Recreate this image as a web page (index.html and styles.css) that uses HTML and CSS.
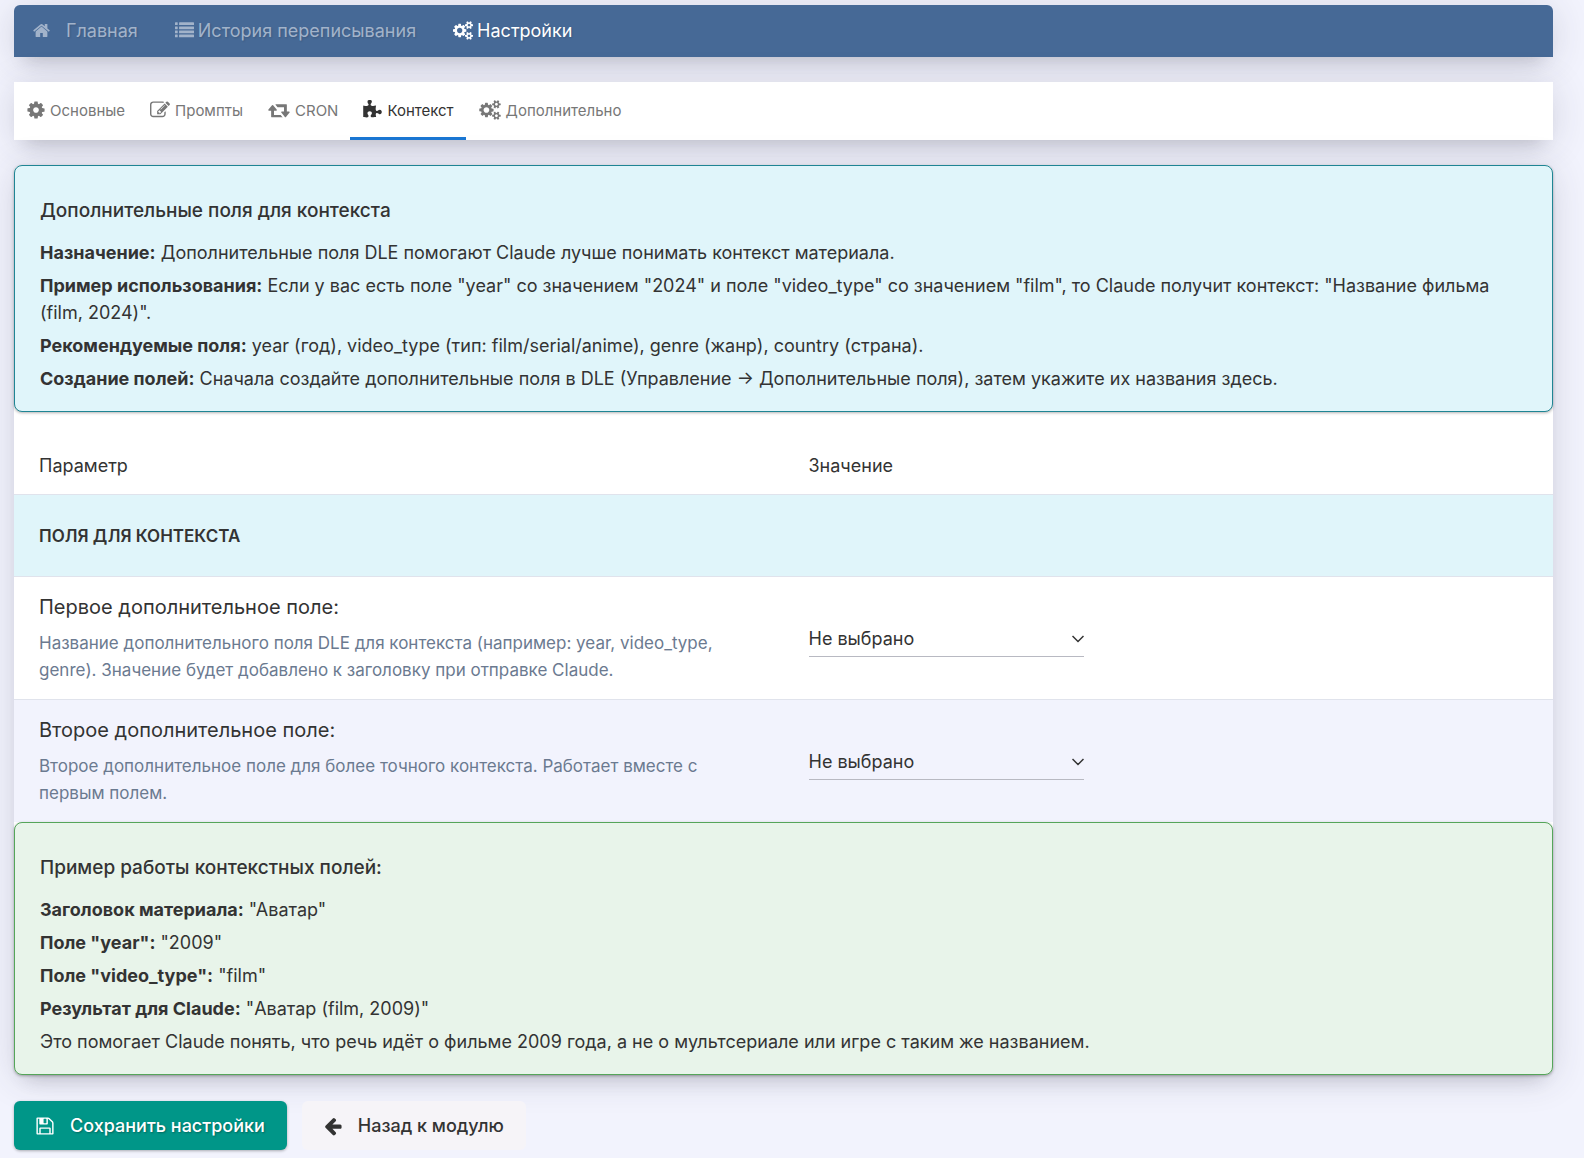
FILE: index.html
```html
<!DOCTYPE html>
<html lang="ru">
<head>
  <meta charset="UTF-8">
  <meta name="viewport" content="width=device-width, initial-scale=1.0">
  <title>Настройки</title>
  <link rel="stylesheet" href="styles.css">
</head>
<body>
  <svg class="sprite" aria-hidden="true">
    <symbol id="i-home" viewBox="64 0 1664 1792"><path d="M1472 992v480q0 26-19 45t-45 19h-384v-384h-256v384h-384q-26 0-45-19t-19-45v-480q0-1 .5-3t.5-3l575-474 575 474q1 2 1 6zm223-69l-62 74q-8 9-21 11h-3q-13 0-21-7l-692-577-692 577q-12 8-24 7-13-2-21-11l-62-74q-8-10-7-23.5t11-21.5l719-599q32-26 76-26t76 26l244 204v-195q0-14 9-23t23-9h192q14 0 23 9t9 23v408l219 182q10 8 11 21.5t-7 23.5z"/></symbol>
    <symbol id="i-list" viewBox="0 0 1792 1792"><rect x="0" y="128" width="256" height="256" rx="32"/><rect x="0" y="512" width="256" height="256" rx="32"/><rect x="0" y="896" width="256" height="256" rx="32"/><rect x="0" y="1280" width="256" height="256" rx="32"/><rect x="384" y="128" width="1408" height="256" rx="32"/><rect x="384" y="512" width="1408" height="256" rx="32"/><rect x="384" y="896" width="1408" height="256" rx="32"/><rect x="384" y="1280" width="1408" height="256" rx="32"/></symbol>
    <symbol id="i-cog" viewBox="128 0 1536 1792"><path d="M1152 896q0-106-75-181t-181-75-181 75-75 181 75 181 181 75 181-75 75-181zm512-109v222q0 12-8 23t-20 13l-185 28q-19 54-39 91 35 50 107 138 10 12 10 25t-9 23q-27 37-99 108t-94 71q-12 0-26-9l-138-108q-44 23-91 38-16 136-29 186-7 28-36 28h-222q-14 0-24.5-8.5t-11.5-21.5l-28-184q-49-16-90-37l-141 107q-10 9-25 9-14 0-25-11-126-114-165-168-7-10-7-23 0-12 8-23 15-21 51-66.5t54-70.5q-27-50-41-99l-183-27q-13-2-21-12.5t-8-23.5v-222q0-12 8-23t19-13l186-28q14-46 39-92-40-57-107-138-10-12-10-24 0-10 9-23 26-36 98.5-107.5t94.5-71.5q13 0 26 10l138 107q44-23 91-38 16-136 29-186 7-28 36-28h222q14 0 24.5 8.5t11.5 21.5l28 184q49 16 90 37l142-107q9-9 24-9 13 0 25 10 129 119 165 170 7 8 7 22 0 12-8 23-15 21-51 66.5t-54 70.5q26 50 41 98l183 28q13 2 21 12.5t8 23.5z"/></symbol>
    <symbol id="i-cogs" viewBox="0 0 1920 1792"><path d="M896 896q0-106-75-181t-181-75-181 75-75 181 75 181 181 75 181-75 75-181zm768 512q0-52-38-90t-90-38-90 38-38 90q0 53 37.5 90.5t90.5 37.5 90.5-37.5 37.5-90.5zm0-1024q0-52-38-90t-90-38-90 38-38 90q0 53 37.5 90.5t90.5 37.5 90.5-37.5 37.5-90.5zm-384 421v185q0 10-7 19.5t-16 10.5l-155 24q-11 35-32 76 34 48 90 115 7 11 7 20 0 12-7 19-23 30-82.5 89.5t-78.5 59.5q-11 0-21-7l-115-90q-37 19-77 31-11 108-23 155-7 24-30 24h-186q-11 0-20-7.5t-10-17.5l-23-153q-34-10-75-31l-118 89q-7 7-20 7-11 0-21-8-144-133-144-160 0-9 7-19 10-14 41-53t47-61q-23-44-35-82l-152-24q-10-1-17-9.5t-7-19.5v-185q0-10 7-19.5t16-10.5l155-24q11-35 32-76-34-48-90-115-7-11-7-20 0-12 7-20 22-30 82-89t79-59q11 0 21 7l115 90q34-18 77-32 11-108 23-154 7-24 30-24h186q11 0 20 7.5t10 17.5l23 153q34 10 75 31l118-89q8-7 20-7 11 0 21 8 144 133 144 160 0 8-7 19-12 16-42 54t-45 60q23 48 34 82l152 23q10 2 17 10.5t7 19.5zm640 533v140q0 16-149 31-12 27-30 52 51 113 51 138 0 4-4 7-122 71-124 71-8 0-46-47t-52-68q-20 2-30 2t-30-2q-14 21-52 68t-46 47q-2 0-124-71-4-3-4-7 0-25 51-138-18-25-30-52-149-15-149-31v-140q0-16 149-31 13-29 30-52-51-113-51-138 0-4 4-7 4-2 35-20t59-34 30-16q8 0 46 46.5t52 67.5q20-2 30-2t30 2q51-71 92-112l6-2q4 0 124 70 4 3 4 7 0 25-51 138 17 23 30 52 149 15 149 31zm0-1024v140q0 16-149 31-12 27-30 52 51 113 51 138 0 4-4 7-122 71-124 71-8 0-46-47t-52-68q-20 2-30 2t-30-2q-14 21-52 68t-46 47q-2 0-124-71-4-3-4-7 0-25 51-138-18-25-30-52-149-15-149-31v-140q0-16 149-31 13-29 30-52-51-113-51-138 0-4 4-7 4-2 35-20t59-34 30-16q8 0 46 46.5t52 67.5q20-2 30-2t30 2q51-71 92-112l6-2q4 0 124 70 4 3 4 7 0 25-51 138 17 23 30 52 149 15 149 31z"/></symbol>
    <symbol id="i-edit" viewBox="0 0 1792 1792"><path d="M888 1184l116-116-152-152-116 116v56h96v96h56zm440-720q-16-16-33 1l-350 350q-17 17-1 33t33-1l350-350q17-17 1-33zm80 594v190q0 119-84.5 203.5t-203.5 84.5h-832q-119 0-203.5-84.5t-84.5-203.5v-832q0-119 84.5-203.5t203.5-84.5h832q63 0 117 25 15 7 18 23 3 17-9 29l-49 49q-14 14-32 8-23-6-45-6h-832q-66 0-113 47t-47 113v832q0 66 47 113t113 47h832q66 0 113-47t47-113v-126q0-13 9-22l64-64q15-15 35-7t20 29zm-96-738l288 288-672 672h-288v-288zm444 132l-92 92-288-288 92-92q28-28 68-28t68 28l152 152q28 28 28 68t-28 68z"/></symbol>
    <symbol id="i-retweet" viewBox="0 0 1920 1792"><path d="M1280 1504q0 13-9.500 22.500t-22.500 9.500h-960q-32 0-32-32V960h-192q-26 0-45-19t-19-45q0-24 15-41l320-384q19-22 49-22t49 22l320 384q15 17 15 41 0 26-19 45t-45 19h-192v384h576q16 0 25 11l160 192q7 10 7 21zm640-416q0 24-15 41l-320 384q-20 23-49 23t-49-23l-320-384q-15-17-15-41 0-26 19-45t45-19h192v-384h-576q-16 0-25-12l-160-192q-7-9-7-20 0-13 9.500-22.500t22.500-9.500h960q32 0 32 32V1024h192q26 0 45 19t19 45z"/></symbol>
    <symbol id="i-puzzle" viewBox="91 0 1664 1792"><path d="M1755 1083q0 81-44.500 135t-123.500 54q-41 0-77.500-17.500t-59-38-56.500-38-71-17.500q-110 0-110 124 0 39 16 115t15 115v5q-22 0-33 1-34 3-97.500 11.500t-115.500 13.500-98 5q-61 0-103-26.500t-42-83.500q0-37 17.500-71t38-56.500 38-59 17.500-77.500q0-79-54-123.500t-135-44.500q-84 0-143 45.500t-59 127.500q0 43 15 83t33.500 64.500 33.500 53 15 50.500q0 45-46 89-37 35-117 35-95 0-245-24-9-2-27.500-4t-27.500-4l-13-2q-1 0-3-1-2 0-2-1v-1024q2 1 17.500 3.500t34 5 21.500 3.500q150 24 245 24 80 0 117-35 46-44 46-89 0-22-15-50.500t-33.500-53-33.500-64.500-15-83q0-82 59-127.500t144-45.500q80 0 134 44.500t54 123.500q0 41-17.500 77.500t-38 59-38 56.500-17.500 71q0 57 42 83.500t103 26.500q64 0 180-15t163-17v2q-1 2-3.500 17.500t-5 34-3.500 21.500q-24 150-24 245 0 80 35 117 44 46 89 46 22 0 50.500-15t53-33.500 64.500-33.500 83-15q82 0 127.500 59t45.500 143z"/></symbol>
    <symbol id="i-save" viewBox="128 0 1536 1792"><path d="M512 1536h768v-384h-768v384zm896 0h128v-896q0-14-10-38.500t-20-34.500l-281-281q-10-10-34-20t-39-10v416q0 40-28 68t-68 28h-576q-40 0-68-28t-28-68v-416h-128v1280h128v-416q0-40 28-68t68-28h832q40 0 68 28t28 68v416zm-384-928v-320q0-13-9.500-22.500t-22.500-9.500h-192q-13 0-22.500 9.500t-9.500 22.500v320q0 13 9.500 22.500t22.500 9.500h192q13 0 22.500-9.500t9.500-22.500zm640 32v928q0 40-28 68t-68 28h-1344q-40 0-68-28t-28-68v-1344q0-40 28-68t68-28h928q40 0 88 20t76 48l280 280q28 28 48 76t20 88z"/></symbol>
    <symbol id="i-back" viewBox="128 0 1536 1792"><path d="M1664 896v128q0 53-32.500 90.500t-84.500 37.500h-704l293 294q38 36 38 90t-38 90l-75 76q-37 37-90 37-52 0-91-37l-651-652q-37-37-37-90 0-52 37-91l651-650q38-38 91-38 52 0 90 38l75 74q38 38 38 91t-38 91l-293 293h704q52 0 84.500 37.500t32.500 90.500z"/></symbol>
  </svg>

  <nav class="navbar">
    <a class="nav-link nav-home" href="#"><svg class="icon home"><use href="#i-home"/></svg>Главная</a>
    <a class="nav-link" href="#"><svg class="icon"><use href="#i-list"/></svg>История переписывания</a>
    <a class="nav-link active" href="#"><svg class="icon wide"><use href="#i-cogs"/></svg>Настройки</a>
  </nav>

  <nav class="tabs">
    <a class="tab" href="#"><svg class="icon narrow"><use href="#i-cog"/></svg>Основные</a>
    <a class="tab" href="#"><svg class="icon"><use href="#i-edit"/></svg>Промпты</a>
    <a class="tab" href="#"><svg class="icon wide"><use href="#i-retweet"/></svg>CRON</a>
    <a class="tab active" href="#"><svg class="icon puzzle"><use href="#i-puzzle"/></svg>Контекст</a>
    <a class="tab" href="#"><svg class="icon wide"><use href="#i-cogs"/></svg>Дополнительно</a>
  </nav>

  <form id="contextForm">
    <div class="panel">
      <div class="alert alert-info">
        <h4>Дополнительные поля для контекста</h4>
        <p><b>Назначение:</b> Дополнительные поля DLE помогают Claude лучше понимать контекст материала.</p>
        <p><b>Пример использования:</b> Если у вас есть поле "year" со значением "2024" и поле "video_type" со значением "film", то Claude получит контекст: "Название фильма (film, 2024)".</p>
        <p><b>Рекомендуемые поля:</b> year (год), video_type (тип: film/serial/anime), genre (жанр), country (страна).</p>
        <p><b>Создание полей:</b> Сначала создайте дополнительные поля в DLE (Управление → Дополнительные поля), затем укажите их названия здесь.</p>
      </div>

      <table class="settings">
        <thead>
          <tr>
            <th>Параметр</th>
            <th>Значение</th>
          </tr>
        </thead>
        <tbody>
          <tr class="section">
            <td colspan="2">ПОЛЯ ДЛЯ КОНТЕКСТА</td>
          </tr>
          <tr>
            <td>
              <label for="field1">Первое дополнительное поле:</label>
              <div class="hint">Название дополнительного поля DLE для контекста (например: year, video_type, genre). Значение будет добавлено к заголовку при отправке Claude.</div>
            </td>
            <td>
              <div class="select-wrap">
                <select id="field1" name="field1"><option>Не выбрано</option></select>
                <svg class="chevron" viewBox="0 0 12 8"><path d="M0.500 1l5.500 5.500 5.500-5.500"/></svg>
              </div>
            </td>
          </tr>
          <tr class="even">
            <td>
              <label for="field2">Второе дополнительное поле:</label>
              <div class="hint">Второе дополнительное поле для более точного контекста. Работает вместе с первым полем.</div>
            </td>
            <td>
              <div class="select-wrap">
                <select id="field2" name="field2"><option>Не выбрано</option></select>
                <svg class="chevron" viewBox="0 0 12 8"><path d="M0.500 1l5.500 5.500 5.500-5.500"/></svg>
              </div>
            </td>
          </tr>
        </tbody>
      </table>

      <div class="alert alert-success">
        <h4>Пример работы контекстных полей:</h4>
        <p><b>Заголовок материала:</b> "Аватар"</p>
        <p><b>Поле "year":</b> "2009"</p>
        <p><b>Поле "video_type":</b> "film"</p>
        <p><b>Результат для Claude:</b> "Аватар (film, 2009)"</p>
        <p>Это помогает Claude понять, что речь идёт о фильме 2009 года, а не о мультсериале или игре с таким же названием.</p>
      </div>
    </div>

    <div class="actions">
      <button type="submit" class="btn btn-save"><svg class="icon narrow"><use href="#i-save"/></svg>Сохранить настройки</button>
      <button type="button" class="btn btn-back"><svg class="icon narrow"><use href="#i-back"/></svg>Назад к модулю</button>
    </div>
  </form>
</body>
</html>
```
FILE: styles.css
```css
* {
  box-sizing: border-box;
}

body {
  margin: 0;
  padding: 5px 31px 8px 14px;
  font-family: Inter, "Liberation Sans", sans-serif;
  font-size: 18px;
  line-height: 27px;
  color: #333333;
  background-color: #f2f3fd;
}

.sprite {
  display: none;
}

.icon {
  width: 20px;
  height: 20px;
  fill: currentColor;
  flex: none;
}

.icon.narrow {
  width: 18px;
}

.icon.wide {
  width: 22px;
}

.icon.puzzle {
  width: 19px;
}

/* top bars */
.navbar,
.tabs,
.panel {
  box-shadow: 0 14px 18px -12px rgba(40, 40, 60, 0.2), 0 4px 36px rgba(50, 50, 70, 0.16);
}

.navbar {
  display: flex;
  height: 52px;
  background-color: #466996;
  border-radius: 6px 6px 0 0;
}

.nav-link {
  display: flex;
  align-items: center;
  gap: 4px;
  padding: 0 18px 2px 19px;
  color: #a2b3ca;
  text-decoration: none;
  font-weight: 400;
  text-shadow: 1px 1px 2px rgba(0, 0, 0, 0.15);
}

.nav-link .icon {
  width: 19px;
  height: 19px;
}

.nav-link .icon.wide {
  width: 20px;
}

.nav-link .icon.home {
  width: 17px;
}

.nav-link.nav-home {
  gap: 16px;
}

.nav-link.active {
  color: #ffffff;
}

.tabs {
  display: flex;
  height: 58px;
  margin-top: 25px;
  background-color: #ffffff;
}

.tab {
  display: flex;
  align-items: center;
  gap: 5px;
  padding: 1px 12px 0 13px;
  border-bottom: 3px solid transparent;
  color: #777777;
  font-size: 15px;
  text-decoration: none;
}

.tab.active {
  color: #333333;
  border-bottom-color: #1976d2;
}

/* main panel */
.panel {
  margin-top: 25px;
  background-color: #ffffff;
  border-radius: 8px;
}

.alert {
  padding: 30px 25px 19px;
  border: 1px solid;
  border-radius: 8px;
  box-shadow: 0 1px 3px rgba(0, 0, 0, 0.3);
}

.alert-info {
  background-color: #e0f5fa;
  border-color: #1f8594;
}

.alert-success {
  background-color: #e8f4ea;
  border-color: #55a55a;
}

.alert h4 {
  margin: 0 0 13px;
  font-size: 19px;
  line-height: 30px;
  font-weight: 500;
}

.alert p {
  margin: 0 0 6px;
}

.alert p:last-child {
  margin-bottom: 0;
}

.settings {
  width: 100%;
  table-layout: fixed;
  border-collapse: separate;
  border-spacing: 0;
}

.settings th {
  padding: 40px 25px 15px;
  font-weight: 400;
  text-align: left;
}

.settings td {
  padding: 17px 25px 15px;
  border-top: 1px solid #e0e3ec;
}

.settings .section td {
  padding: 28px 25px 26px;
  background-color: #e0f5fa;
  font-size: 17px;
  font-weight: 600;
}

.settings .even td {
  background-color: #f2f3fd;
}

.settings label {
  display: block;
  font-size: 20px;
}

.hint {
  margin-top: 9px;
  color: #6b7a90;
  font-size: 17px;
}

.select-wrap {
  position: relative;
  width: 275px;
}

.select-wrap select {
  display: block;
  width: 100%;
  height: 36px;
  padding: 0;
  border: none;
  border-bottom: 1px solid #b8b9c2;
  background: transparent;
  appearance: none;
  font: inherit;
  color: #333333;
}

.chevron {
  position: absolute;
  right: 0;
  top: 14px;
  width: 12px;
  height: 8px;
  fill: none;
  stroke: #333333;
  stroke-width: 1.5;
  pointer-events: none;
}

/* buttons */
.actions {
  display: flex;
  gap: 15px;
  margin-top: 26px;
}

.btn {
  display: flex;
  align-items: center;
  gap: 16px;
  height: 49px;
  padding: 0 22px;
  border: none;
  border-radius: 6px;
  font: inherit;
  font-weight: 500;
  cursor: pointer;
}

.btn-save {
  background-color: #009688;
  color: #ffffff;
  text-shadow: 1px 1px 2px rgba(0, 0, 0, 0.3);
  box-shadow: 0 1px 3px rgba(0, 0, 0, 0.3);
}

.btn-back {
  background-color: #f6f4f8;
  color: #333333;
}
```
